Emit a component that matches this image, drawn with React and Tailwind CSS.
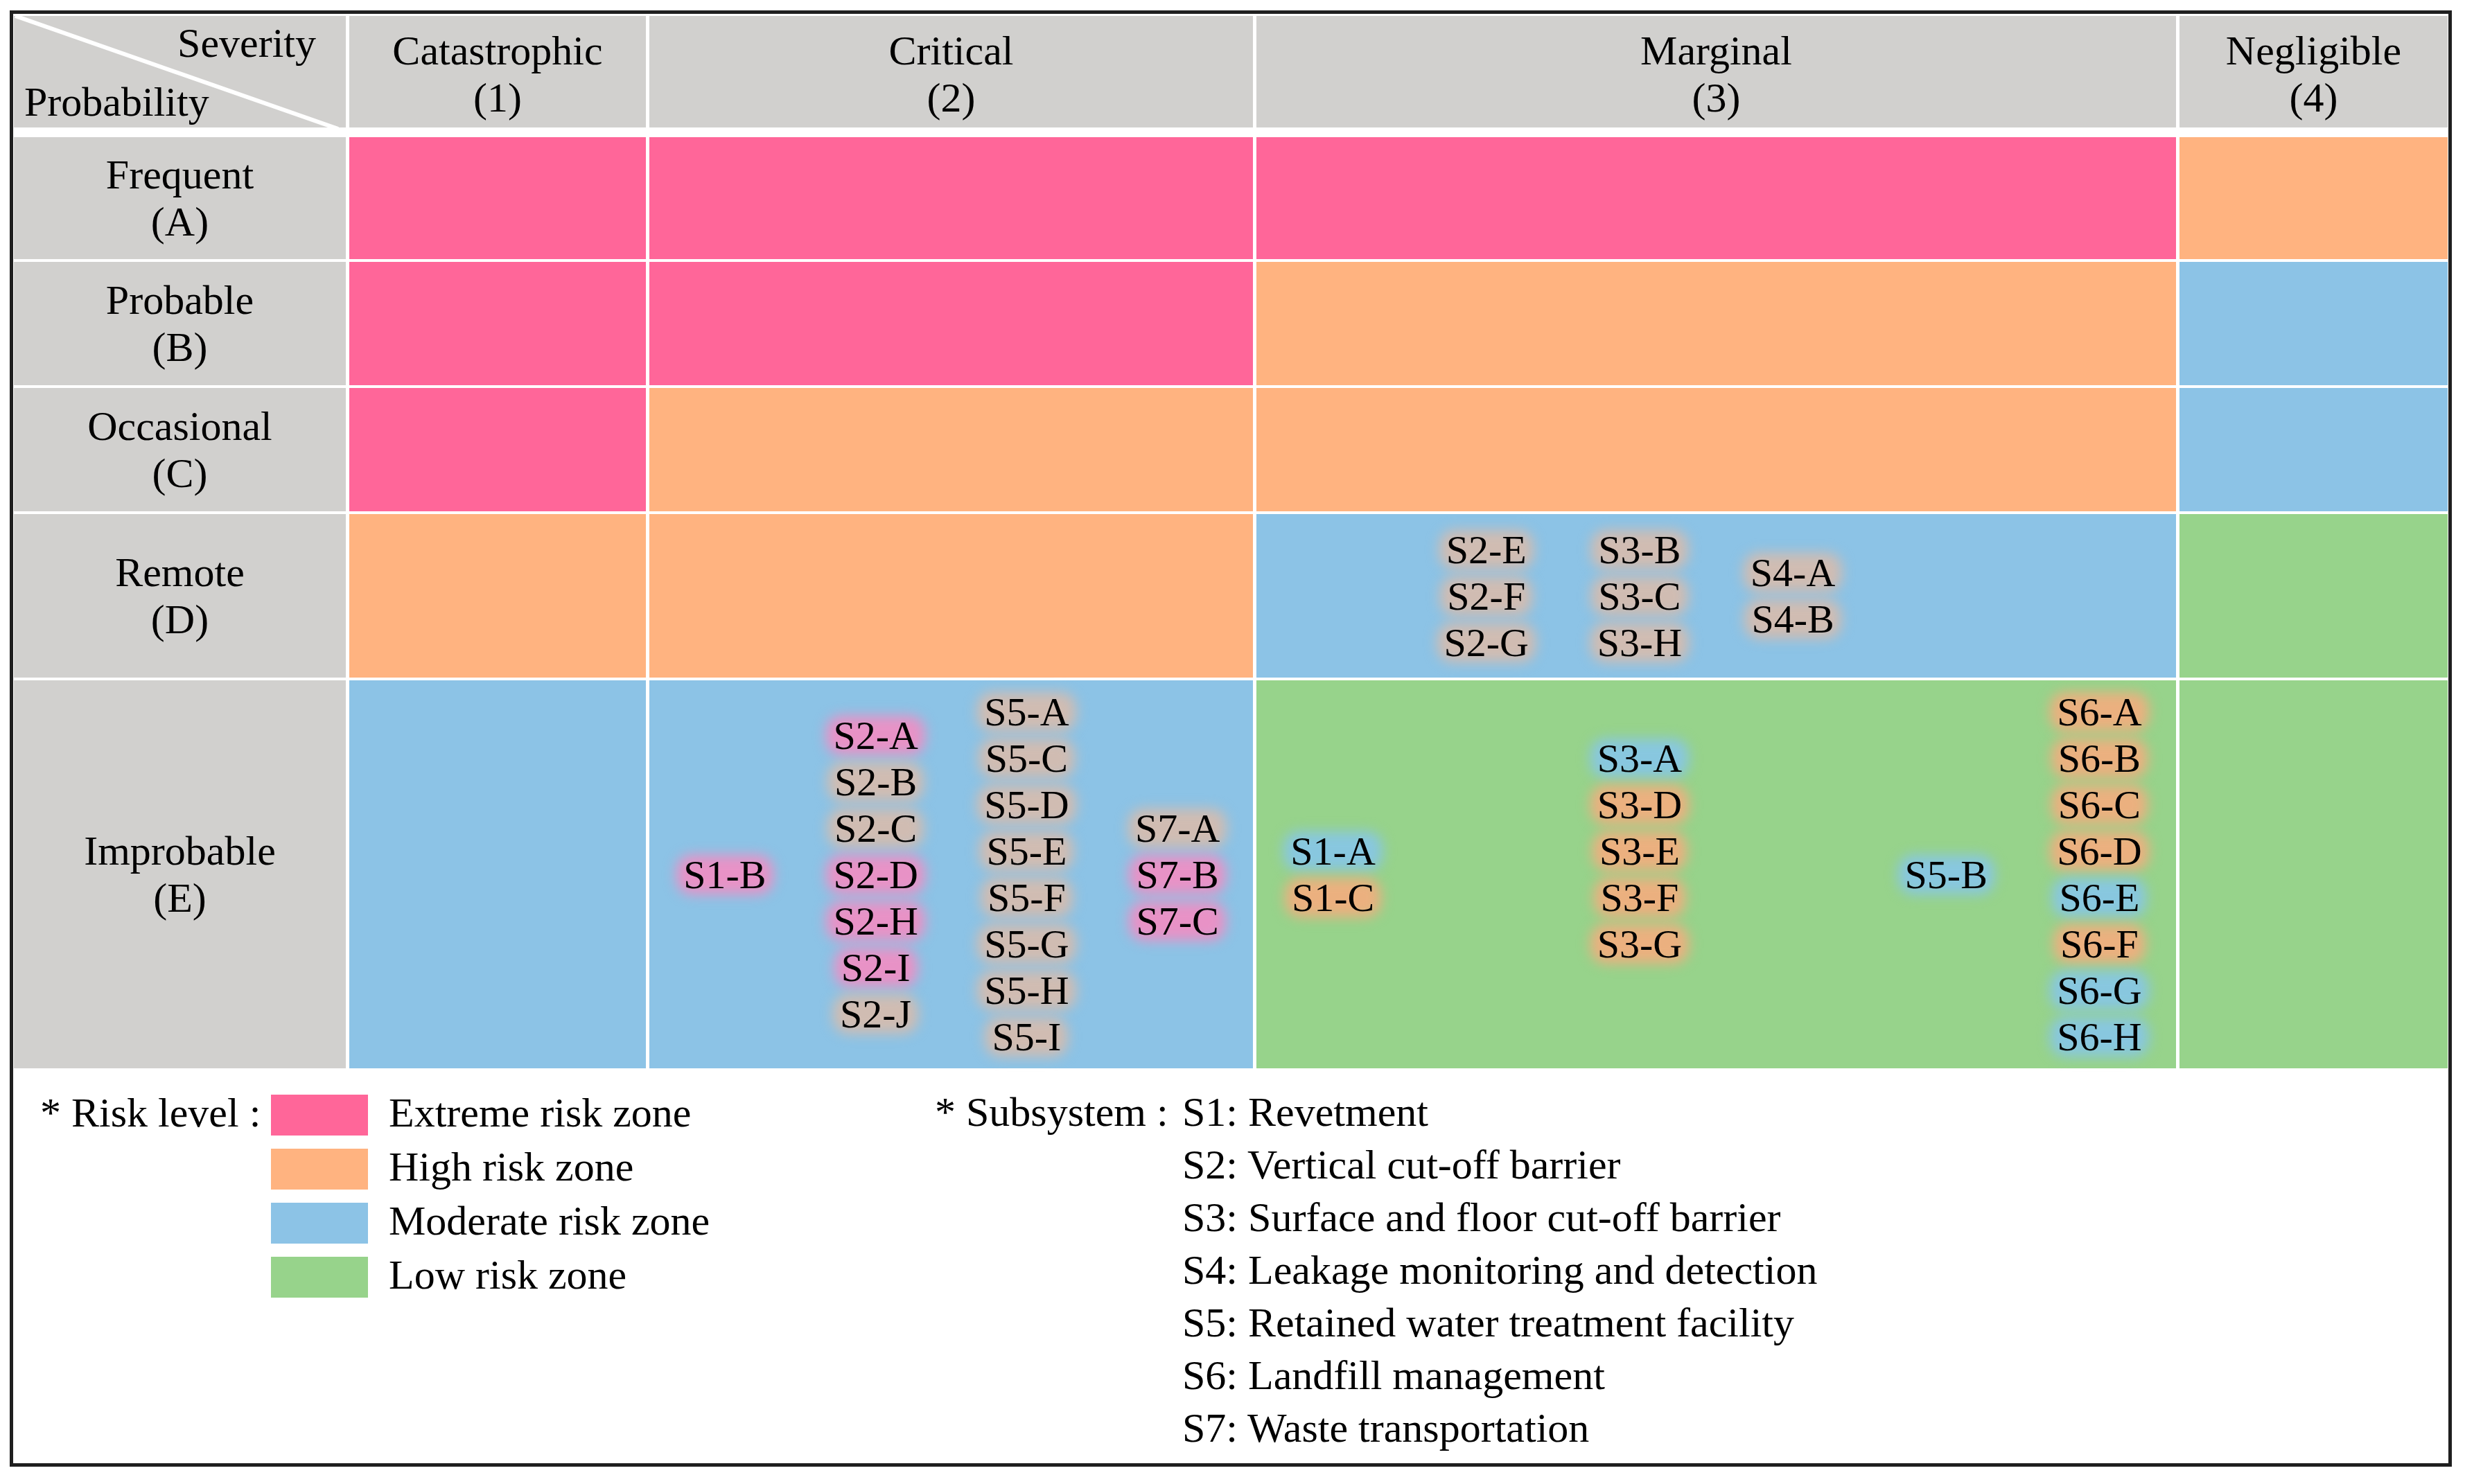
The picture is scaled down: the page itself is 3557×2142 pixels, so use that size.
import React from 'react';

const zone = {
  E: 'bg-[#ff6699]',
  H: 'bg-[#ffb380]',
  M: 'bg-[#8cc3e6]',
  L: 'bg-[#97d38b]',
};

const haloColor = {
  p: 'bg-[#e892c6]',
  g: 'bg-[#d0bcb2]',
  o: 'bg-[#ebb07f]',
  b: 'bg-[#88c7df]',
};

const columns = [
  { name: 'Catastrophic', code: '(1)' },
  { name: 'Critical', code: '(2)' },
  { name: 'Marginal', code: '(3)' },
  { name: 'Negligible', code: '(4)' },
];

const rows = [
  { name: 'Frequent', code: '(A)', cells: ['E', 'E', 'E', 'H'] },
  { name: 'Probable', code: '(B)', cells: ['E', 'E', 'H', 'M'] },
  { name: 'Occasional', code: '(C)', cells: ['E', 'H', 'H', 'M'] },
  { name: 'Remote', code: '(D)', cells: ['H', 'H', 'M', 'L'] },
  { name: 'Improbable', code: '(E)', cells: ['M', 'M', 'L', 'L'] },
];

const legend = [
  { label: 'Extreme risk zone', color: 'bg-[#ff6699]' },
  { label: 'High risk zone', color: 'bg-[#ffb380]' },
  { label: 'Moderate risk zone', color: 'bg-[#8cc3e6]' },
  { label: 'Low risk zone', color: 'bg-[#97d38b]' },
];

const subsystems = [
  'S1: Revetment',
  'S2: Vertical cut-off barrier',
  'S3: Surface and floor cut-off barrier',
  'S4: Leakage monitoring and detection',
  'S5: Retained water treatment facility',
  'S6: Landfill management',
  'S7: Waste transportation',
];

const Tag = ({ id, halo }) => (
  <span className="relative block leading-[67px]">
    <span className={`absolute inset-x-[-10px] inset-y-[5px] rounded-[22px] blur-[9px] ${haloColor[halo]}`} />
    <span className="relative">{id}</span>
  </span>
);

const Stack = ({ items, className = '' }) => (
  <div className={`flex flex-col items-center justify-center ${className}`}>
    {items.map(([id, halo]) => (
      <Tag key={id} id={id} halo={halo} />
    ))}
  </div>
);

// hazards placed in the matrix cells, keyed by row-col
const RemoteMarginal = () => (
  <div className="grid h-full grid-cols-6 items-center">
    <div />
    <Stack items={[['S2-E', 'g'], ['S2-F', 'g'], ['S2-G', 'g']]} />
    <Stack items={[['S3-B', 'g'], ['S3-C', 'g'], ['S3-H', 'g']]} />
    <Stack items={[['S4-A', 'g'], ['S4-B', 'g']]} />
  </div>
);

const ImprobableCritical = () => (
  <div className="grid h-full grid-cols-4 items-center">
    <Stack items={[['S1-B', 'p']]} />
    <Stack
      items={[
        ['S2-A', 'p'],
        ['S2-B', 'g'],
        ['S2-C', 'g'],
        ['S2-D', 'p'],
        ['S2-H', 'p'],
        ['S2-I', 'p'],
        ['S2-J', 'g'],
      ]}
    />
    <Stack
      items={[
        ['S5-A', 'g'],
        ['S5-C', 'g'],
        ['S5-D', 'g'],
        ['S5-E', 'g'],
        ['S5-F', 'g'],
        ['S5-G', 'g'],
        ['S5-H', 'g'],
        ['S5-I', 'g'],
      ]}
    />
    <Stack items={[['S7-A', 'g'], ['S7-B', 'p'], ['S7-C', 'p']]} />
  </div>
);

const ImprobableMarginal = () => (
  <div className="grid h-full grid-cols-6 items-center">
    <Stack items={[['S1-A', 'b'], ['S1-C', 'o']]} />
    <div />
    <Stack
      className="pb-[67px]"
      items={[['S3-A', 'b'], ['S3-D', 'o'], ['S3-E', 'o'], ['S3-F', 'o'], ['S3-G', 'o']]}
    />
    <div />
    <Stack items={[['S5-B', 'b']]} />
    <Stack
      items={[
        ['S6-A', 'o'],
        ['S6-B', 'o'],
        ['S6-C', 'o'],
        ['S6-D', 'o'],
        ['S6-E', 'b'],
        ['S6-F', 'o'],
        ['S6-G', 'b'],
        ['S6-H', 'b'],
      ]}
    />
  </div>
);

const cellContent = {
  '3-2': <RemoteMarginal />,
  '4-1': <ImprobableCritical />,
  '4-2': <ImprobableMarginal />,
};

const App = () => {
  return (
    <div className="w-[3557px] h-[2142px] bg-white pt-[15px] pl-[14px] text-black font-['Liberation_Serif',serif]">
      <div className="w-[3524px] h-[2102px] border-[5px] border-[#1f1f1f] pt-[3px] pl-[1px]">
        {/* Header row */}
        <div className="grid grid-cols-[479px_428px_871px_1327px_387px] gap-x-[5px] h-[161px] text-[60px] leading-[68px]">
          <div className="relative bg-[#d1d0ce] flex flex-col justify-between pt-[5px] pb-[3px]">
            <svg className="absolute inset-0 h-full w-full" viewBox="0 0 479 161" preserveAspectRatio="none">
              <line x1="2" y1="0" x2="468" y2="163" stroke="#ffffff" strokeWidth="6" />
            </svg>
            <div className="relative text-right pr-[43px]">Severity</div>
            <div className="relative pl-[15px]">Probability</div>
          </div>
          {columns.map((c) => (
            <div key={c.name} className="bg-[#d1d0ce] flex flex-col items-center justify-center text-center pt-[6px]">
              <span>{c.name}</span>
              <span>{c.code}</span>
            </div>
          ))}
        </div>

        {/* Matrix body */}
        <div className="mt-[14px] grid grid-cols-[479px_428px_871px_1327px_387px] grid-rows-[176px_178px_178px_236px_560px] gap-x-[5px] gap-y-[4px]">
          {rows.map((r, ri) => (
            <React.Fragment key={r.name}>
              <div className="bg-[#d1d0ce] flex flex-col items-center justify-center text-center text-[60px] leading-[68px]">
                <span>{r.name}</span>
                <span>{r.code}</span>
              </div>
              {r.cells.map((z, ci) => (
                <div key={ci} className={`${zone[z]} text-[58px]`}>
                  {cellContent[`${ri}-${ci}`] || null}
                </div>
              ))}
            </React.Fragment>
          ))}
        </div>

        {/* Legend */}
        <div className="flex pl-[38px] pt-[25px] text-[60px] whitespace-nowrap">
          <div className="flex w-[1291px]">
            <div className="w-[333px] leading-[78px]">* Risk level :</div>
            <div className="flex flex-col">
              {legend.map((l) => (
                <div key={l.label} className="flex h-[78px] items-center">
                  <div className={`mt-[6px] h-[59px] w-[140px] ${l.color}`} />
                  <span className="ml-[30px] leading-[78px]">{l.label}</span>
                </div>
              ))}
            </div>
          </div>
          <div className="flex">
            <div className="w-[357px] leading-[76px]">* Subsystem :</div>
            <div className="flex flex-col">
              {subsystems.map((s) => (
                <div key={s} className="leading-[76px]">
                  {s}
                </div>
              ))}
            </div>
          </div>
        </div>
      </div>
    </div>
  );
};

export default App;
